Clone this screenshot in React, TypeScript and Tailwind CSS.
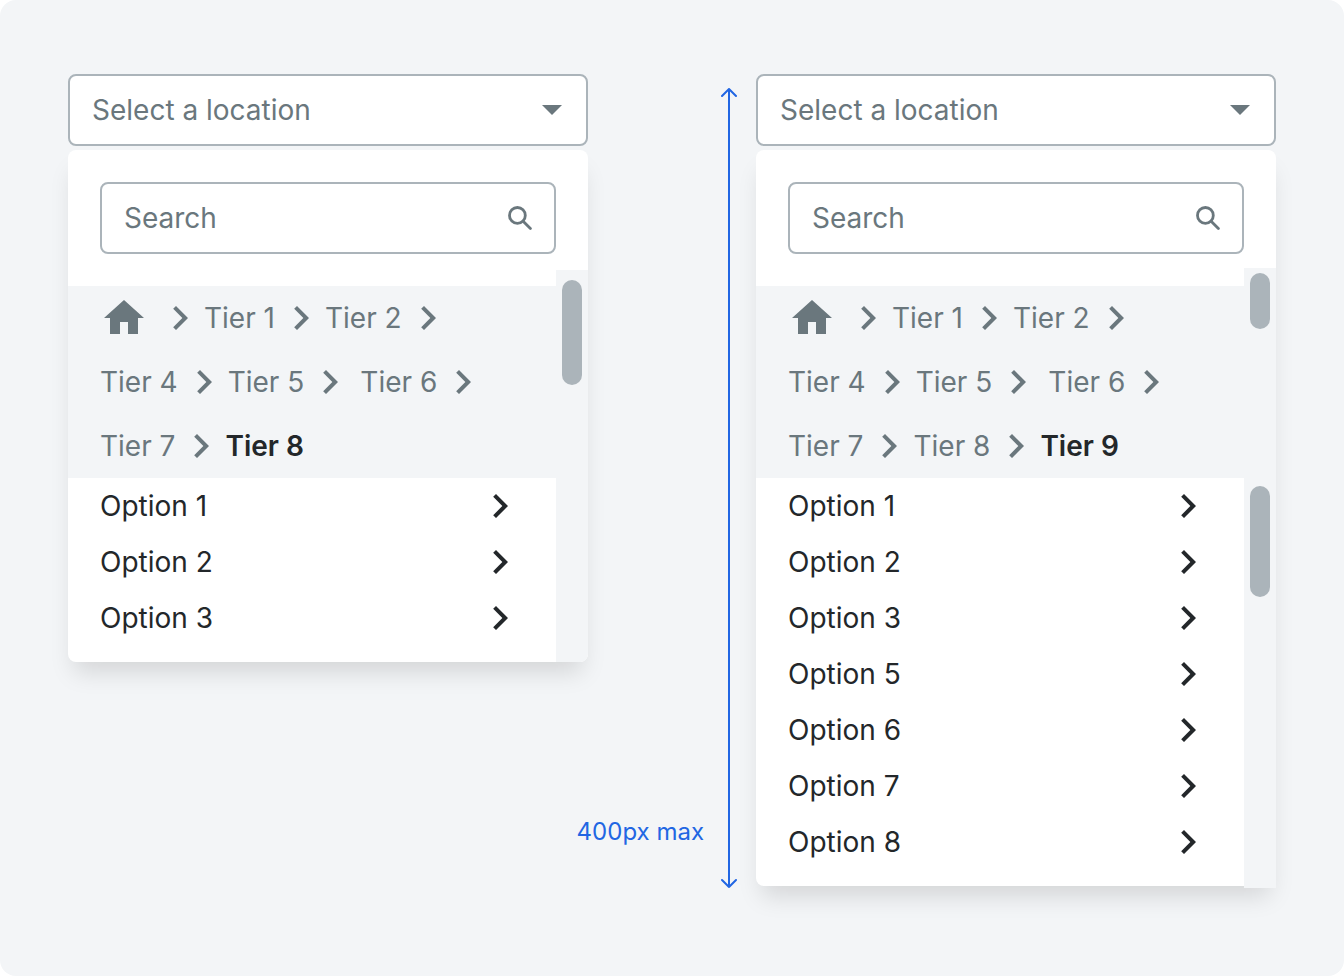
import { useId, useState } from 'react'

interface Crumb {
  label: string
  spaced?: boolean
}

interface LocationSelectProps {
  rows: Crumb[][]
  current: string
  options: string[]
  trackClass: string
  thumbs: string[]
}

const SHORT_ROWS: Crumb[][] = [
  [{ label: 'Tier 1' }, { label: 'Tier 2' }],
  [{ label: 'Tier 4' }, { label: 'Tier 5' }, { label: 'Tier 6', spaced: true }],
  [{ label: 'Tier 7' }],
]

const LONG_ROWS: Crumb[][] = [
  ...SHORT_ROWS.slice(0, 2),
  [{ label: 'Tier 7' }, { label: 'Tier 8' }],
]

const SHORT_OPTIONS = ['Option 1', 'Option 2', 'Option 3']
const LONG_OPTIONS = ['Option 1', 'Option 2', 'Option 3', 'Option 5', 'Option 6', 'Option 7', 'Option 8']

function Chevron() {
  return (
    <svg viewBox="0 0 24 24" className="size-12 shrink-0" fill="currentColor" aria-hidden="true">
      <path d="M10 6 8.59 7.41 13.17 12l-4.58 4.59L10 18l6-6z" />
    </svg>
  )
}

function HomeIcon() {
  return (
    <svg viewBox="0 0 24 24" className="size-12" fill="currentColor" aria-hidden="true">
      <path d="M10 20v-6h4v6h5v-8h3L12 3 2 12h3v8z" />
    </svg>
  )
}

function LocationSelect({ rows, current, options, trackClass, thumbs }: LocationSelectProps) {
  const id = useId()
  const [search, setSearch] = useState('')
  const visible = options.filter(o => o.toLowerCase().includes(search.toLowerCase()))

  return (
    <div className="flex min-w-0 flex-1 flex-col gap-1">
      <div className="relative">
        <select
          id={`${id}-location`}
          aria-label="Location"
          className="block h-18 w-full appearance-none rounded-lg border-2 border-[#abb4ba] bg-white px-[22px] text-[#6a777d]"
        >
          <option>Select a location</option>
        </select>
        <svg viewBox="0 0 20 10" className="pointer-events-none absolute top-[31px] right-[26px] h-2.5 w-5 text-[#6a777d]" fill="currentColor" aria-hidden="true">
          <path d="M0 0h20L10 10z" />
        </svg>
      </div>

      <div className="rounded-lg bg-white shadow-[0_16px_24px_-6px_rgba(0,0,0,0.13)]">
        {/* Search */}
        <div className="p-8">
          <div className="relative">
            <input
              id={`${id}-search`}
              type="text"
              aria-label="Search"
              placeholder="Search"
              value={search}
              onChange={(e) => setSearch(e.target.value)}
              className="block h-18 w-full rounded-lg border-2 border-[#abb4ba] bg-white px-[22px] placeholder:text-[#6a777d]"
            />
            <svg viewBox="0 0 24 24" className="pointer-events-none absolute top-6 right-6 size-6 text-[#6a777d]" fill="none" stroke="currentColor" strokeWidth="2.8" strokeLinecap="round" aria-hidden="true">
              <circle cx="9.4" cy="9.4" r="7.9" />
              <path d="m15.4 15.4 7 7" />
            </svg>
          </div>
        </div>

        <div className="flex">
          <div className="min-w-0 flex-1">
            {/* Breadcrumb */}
            <nav aria-label="Tiers" className="bg-[#f3f5f7] pl-8 text-[#6a777d]">
              {rows.map((row, i) => (
                <div key={i} className="flex h-16 items-center whitespace-nowrap">
                  {i === 0 && (
                    <>
                      <a href="#home" aria-label="Home" className="mr-2"><HomeIcon /></a>
                      <Chevron />
                    </>
                  )}
                  {row.map(crumb => (
                    <div key={crumb.label} className="flex items-center gap-0.5">
                      <a href="#tier" className={crumb.spaced ? 'pl-1.5' : ''}>{crumb.label}</a>
                      <Chevron />
                    </div>
                  ))}
                  {i === rows.length - 1 && (
                    <span aria-current="page" className="font-semibold text-[#23272a]">{current}</span>
                  )}
                </div>
              ))}
            </nav>

            {/* Options */}
            <ul className="pb-4 text-[#23272a]">
              {visible.map(option => (
                <li key={option}>
                  <button type="button" className="flex h-14 w-full items-center justify-between px-8 text-left">
                    {option}
                    <Chevron />
                  </button>
                </li>
              ))}
            </ul>
          </div>

          {/* Scrollbar track, starts above the breadcrumb */}
          <div className={`w-8 shrink-0 bg-[#f3f5f7] ${trackClass}`}>
            {thumbs.map(thumb => (
              <div key={thumb} className={`mx-auto w-5 rounded-full bg-[#abb4ba] ${thumb}`} />
            ))}
          </div>
        </div>
      </div>
    </div>
  )
}

export default function App() {
  return (
    <div className="min-h-screen bg-white">
      <main className="flex min-h-screen items-start rounded-2xl bg-[#f3f5f7] px-[68px] pt-[74px] pb-20 font-['Inter',sans-serif] text-[28px] leading-10">
        <LocationSelect
          rows={SHORT_ROWS}
          current="Tier 8"
          options={SHORT_OPTIONS}
          trackClass="-mt-4 rounded-br-lg pt-2.5"
          thumbs={['h-[105px]']}
        />

        {/* Height marker */}
        <div className="mt-3.5 flex w-42 shrink-0 items-end justify-end gap-4 pr-[18px] text-[#2166e3]">
          <p className="pb-10 text-2xl whitespace-nowrap">400px max</p>
          <svg viewBox="0 0 18 800" className="h-[800px] w-[18px] shrink-0" fill="none" stroke="currentColor" strokeWidth="2" strokeLinecap="round" strokeLinejoin="round" aria-hidden="true">
            <path d="M9 1v798M2 8l7-7 7 7M2 792l7 7 7-7" />
          </svg>
        </div>

        <LocationSelect
          rows={LONG_ROWS}
          current="Tier 9"
          options={LONG_OPTIONS}
          trackClass="-mt-[18px] -mb-0.5 pt-[5px]"
          thumbs={['h-14', 'mt-[157px] h-[111px]']}
        />
      </main>
    </div>
  )
}
